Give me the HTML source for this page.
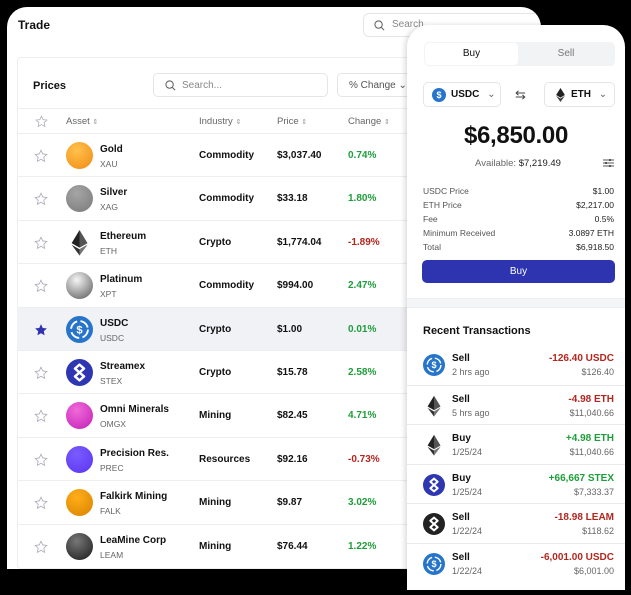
<!DOCTYPE html>
<html><head><meta charset="utf-8"><style>
*{margin:0;padding:0;box-sizing:border-box}
body{width:631px;height:595px;background:#000;position:relative;overflow:hidden;font-family:"Liberation Sans",sans-serif;color:#111}
.a{position:absolute}
#left{left:7px;top:7px;width:534px;height:562px;background:#fff;border-radius:20px 20px 0 0;overflow:hidden}
.b{font-weight:bold}
.row{position:absolute;left:10px;width:540px;height:43.4px;border-top:1px solid #eceef1}
.ic{position:absolute;width:27px;height:27px;border-radius:50%}
.star{position:absolute}
#right{left:407px;top:25px;width:218px;height:565px;background:#fff;border-radius:22px 22px 0 0;box-shadow:-2px 0 6px rgba(0,0,0,.15);overflow:hidden}
.dl{position:absolute;left:16px;right:11px;font-size:8.5px;color:#555;display:flex;justify-content:space-between}
.dl span:last-child{color:#222}
.tx{position:absolute;left:0;width:218px;height:39.5px;border-top:1px solid #e8eaed}
.tx .t1{position:absolute;left:45px;top:8px;font-size:10px;font-weight:bold}
.tx .t2{position:absolute;left:45px;top:22px;font-size:9px;color:#666}
.tx .r1{position:absolute;right:11px;top:8px;font-size:10px;font-weight:bold}
.tx .r2{position:absolute;right:11px;top:22px;font-size:9px;color:#666}
.red{color:#b3261e}.grn{color:#1f9d3a}
.so{font-size:7px;color:#999}
</style></head><body>
<div id="left" class="a">
 <div class="a b" style="left:11px;top:11px;font-size:12px">Trade</div>
 <div class="a" style="left:356px;top:6px;width:190px;height:24px;border:1px solid #e3e5e8;border-radius:6px;font-size:10px;color:#888;padding:5px 0 0 28px">Search
  <svg class="a" style="left:10px;top:6px" width="11" height="11" viewBox="0 0 12 12"><circle cx="5" cy="5" r="4" fill="none" stroke="#666" stroke-width="1.2"/><path d="M8 8l3 3" stroke="#666" stroke-width="1.2"/></svg></div>
 <div class="a" style="left:10px;top:50px;width:540px;height:512px;border:1px solid #eceef1;border-radius:4px"></div>
 <div class="a b" style="left:26px;top:73px;font-size:11px">Prices</div>
 <div class="a" style="left:146px;top:66px;width:175px;height:24px;border:1px solid #e3e5e8;border-radius:5px;font-size:10px;color:#888;padding:6px 0 0 28px">Search...
  <svg class="a" style="left:11px;top:6px" width="11" height="11" viewBox="0 0 12 12"><circle cx="5" cy="5" r="4" fill="none" stroke="#666" stroke-width="1.2"/><path d="M8 8l3 3" stroke="#666" stroke-width="1.2"/></svg></div>
 <div class="a" style="left:330px;top:66px;width:90px;height:24px;border:1px solid #e3e5e8;border-radius:5px;font-size:10px;color:#555;padding:6px 0 0 11px">% Change &#8964;</div>
 <div class="a" style="left:10px;top:101px;width:540px;height:25px;border-top:1px solid #eceef1;font-size:9.5px;color:#666">
  <svg class="a" style="left:18px;top:6px" width="13" height="13" viewBox="0 0 24 24"><path d="M12 2l3 6.5 7 .8-5.2 4.8 1.4 7L12 17.6 5.8 21.1l1.4-7L2 9.3l7-.8z" fill="none" stroke="#aab" stroke-width="1.4"/></svg>
  <span class="a" style="left:49px;top:7px">Asset <span class="so">⇕</span></span><span class="a" style="left:182px;top:7px">Industry <span class="so">⇕</span></span><span class="a" style="left:260px;top:7px">Price <span class="so">⇕</span></span><span class="a" style="left:331px;top:7px">Change <span class="so">⇕</span></span>
 </div>
 <div id="rows"></div>
</div>
<div id="right" class="a">
 <div class="a" style="left:17px;top:17px;width:191px;height:24px;background:#f2f3f5;border-radius:5px"></div>
 <div class="a" style="left:18px;top:18px;width:93px;height:22px;background:#fff;border-radius:4px;font-size:10px;text-align:center;line-height:22px">Buy</div>
 <div class="a" style="left:111px;top:18px;width:96px;height:22px;font-size:10px;color:#777;text-align:center;line-height:22px">Sell</div>
 <div class="a" style="left:16px;top:57px;width:78px;height:25px;border:1px solid #e3e5e8;border-radius:5px;font-size:10px;font-weight:bold;padding:6px 0 0 27px">USDC <span style="font-weight:normal;color:#666;margin-left:5px">&#8964;</span>
  <div class="a" style="left:8px;top:5px;width:14px;height:14px;border-radius:50%;background:#2775ca;color:#fff;font-size:9px;text-align:center;line-height:14px">$</div></div>
 <div class="a" style="left:108px;top:62px;font-size:13px;color:#444">⇆</div>
 <div class="a" style="left:137px;top:57px;width:71px;height:25px;border:1px solid #e3e5e8;border-radius:5px;font-size:10px;font-weight:bold;padding:6px 0 0 26px">ETH <span style="font-weight:normal;color:#666;margin-left:5px">&#8964;</span>
  <svg class="a" style="left:11px;top:5px" width="9" height="14" viewBox="0 0 10 16"><path d="M5 0L0 8l5 3 5-3z" fill="#222"/><path d="M5 12L0 9l5 7 5-7z" fill="#444"/></svg></div>
 <div class="a b" style="left:0;width:218px;top:97px;text-align:center;font-size:24px;letter-spacing:-.3px">$6,850.00</div>
 <div class="a" style="left:0;width:222px;top:133px;text-align:center;font-size:9.5px;color:#666">Available: <span style="color:#222">$7,219.49</span></div>
 <svg class="a" style="left:196px;top:133px" width="11" height="10" viewBox="0 0 11 10"><path d="M0 2h11M0 5h11M0 8h11" stroke="#555"/><rect x="6" y="1" width="2" height="2" fill="#555"/><rect x="2" y="4" width="2" height="2" fill="#555"/><rect x="6" y="7" width="2" height="2" fill="#555"/></svg>
 <div class="dl" style="top:161px"><span>USDC Price</span><span>$1.00</span></div>
 <div class="dl" style="top:175px"><span>ETH Price</span><span>$2,217.00</span></div>
 <div class="dl" style="top:189px"><span>Fee</span><span>0.5%</span></div>
 <div class="dl" style="top:203px"><span>Minimum Received</span><span>3.0897 ETH</span></div>
 <div class="dl" style="top:217px"><span>Total</span><span>$6,918.50</span></div>
 <div class="a" style="left:15px;top:235px;width:193px;height:23px;background:#2e34b0;border-radius:5px;color:#fff;font-size:10px;text-align:center;line-height:23px">Buy</div>
 <div class="a" style="left:0;top:273px;width:218px;height:10px;background:#f4f5f7;border-top:1px solid #eceef1;border-bottom:1px solid #eceef1"></div>
 <div class="a b" style="left:16px;top:300px;font-size:11px">Recent Transactions</div>
 <div id="txs"></div>
</div>
<script>
const usdc='<div class="ic" style="background:#2775ca;left:LEFTpx;top:TOPpx;width:SZpx;height:SZpx"><svg width="SZ" height="SZ" viewBox="0 0 24 24"><circle cx="12" cy="12" r="7.5" fill="none" stroke="#fff" stroke-width="1.6" stroke-dasharray="9 3"/><text x="12" y="15.5" text-anchor="middle" font-size="10" font-weight="bold" fill="#fff" font-family="Liberation Sans">$</text></svg></div>';
const eth='<svg class="a" style="left:LEFTpx;top:TOPpx" width="SZ" height="SZ" viewBox="0 0 24 24"><path d="M12 1L5 12.5l7 4 7-4z" fill="#222"/><path d="M12 1v15.5l7-4z" fill="#555"/><path d="M12 18L5 14l7 9.5 7-9.5z" fill="#333"/><path d="M12 18v5.5l7-9.5z" fill="#777"/></svg>';
function eight(bg){return '<div class="ic" style="background:'+bg+';left:LEFTpx;top:TOPpx;width:SZpx;height:SZpx"><svg width="SZ" height="SZ" viewBox="0 0 24 24"><path d="M12 5l4 3.5-8 7 4 3.5 4-3.5-8-7z" fill="none" stroke="#fff" stroke-width="2.2" stroke-linejoin="round"/></svg></div>'}
function ball(c1,c2){return '<div class="ic" style="left:LEFTpx;top:TOPpx;width:SZpx;height:SZpx;background:radial-gradient(circle at 40% 30%,'+c1+','+c2+')"></div>'}
const assets=[
['Gold','XAU','Commodity','$3,037.40','0.74%',0,ball('#ffc24d','#f08a12')],
['Silver','XAG','Commodity','$33.18','1.80%',0,ball('#a5a5a5','#7a7a7a')],
['Ethereum','ETH','Crypto','$1,774.04','-1.89%',1,eth],
['Platinum','XPT','Commodity','$994.00','2.47%',0,ball('#f5f5f5','#555')],
['USDC','USDC','Crypto','$1.00','0.01%',0,usdc],
['Streamex','STEX','Crypto','$15.78','2.58%',0,eight('#2f36b2')],
['Omni Minerals','OMGX','Mining','$82.45','4.71%',0,ball('#f06ad8','#c21fb8')],
['Precision Res.','PREC','Resources','$92.16','-0.73%',1,ball('#7a5cff','#5b34f0')],
['Falkirk Mining','FALK','Mining','$9.87','3.02%',0,ball('#ffae1a','#d98200')],
['LeaMine Corp','LEAM','Mining','$76.44','1.22%',0,ball('#777','#1a1a1a')]];
let h='';
assets.forEach((a,i)=>{const top=126+i*43.4;const sel=i==4;
const star=sel?'<path d="M12 2l3 6.5 7 .8-5.2 4.8 1.4 7L12 17.6 5.8 21.1l1.4-7L2 9.3l7-.8z" fill="#2e34b0"/>':'<path d="M12 2l3 6.5 7 .8-5.2 4.8 1.4 7L12 17.6 5.8 21.1l1.4-7L2 9.3l7-.8z" fill="none" stroke="#aab" stroke-width="1.4"/>';
h+='<div class="row" style="top:'+top+'px;'+(sel?'background:#f1f2f6':'')+'"><svg class="star" style="left:17px;top:15px" width="14" height="14" viewBox="0 0 24 24">'+star+'</svg>'+
a[6].replace(/LEFT/g,49).replace(/TOP/g,8).replace(/SZ/g,27)+
'<div class="a b" style="left:83px;top:10px;font-size:10px">'+a[0]+'</div><div class="a" style="left:83px;top:25px;font-size:8.5px;color:#666">'+a[1]+'</div>'+
'<div class="a b" style="left:182px;top:16px;font-size:10px">'+a[2]+'</div><div class="a b" style="left:260px;top:16px;font-size:10px">'+a[3]+'</div>'+
'<div class="a b '+(a[5]?'red':'grn')+'" style="left:331px;top:16px;font-size:10px">'+a[4]+'</div></div>';});
document.getElementById('rows').innerHTML=h;
const txs=[['Sell','2 hrs ago','-126.40 USDC','$126.40',usdc,1],['Sell','5 hrs ago','-4.98 ETH','$11,040.66',eth,1],['Buy','1/25/24','+4.98 ETH','$11,040.66',eth,0],['Buy','1/25/24','+66,667 STEX','$7,333.37',eight('#2f36b2'),0],['Sell','1/22/24','-18.98 LEAM','$118.62',eight('#222'),1],['Sell','1/22/24','-6,001.00 USDC','$6,001.00',usdc,1]];
let t='';
txs.forEach((x,i)=>{const top=320+i*39.5;
t+='<div class="tx" style="top:'+top+'px;'+(i==0?'border-top:none':'')+'">'+x[4].replace(/LEFT/g,16).replace(/TOP/g,9).replace(/SZ/g,22)+
'<div class="t1">'+x[0]+'</div><div class="t2">'+x[1]+'</div><div class="r1 '+(x[5]?'red':'grn')+'">'+x[2]+'</div><div class="r2">'+x[3]+'</div></div>';});
document.getElementById('txs').innerHTML=t;
</script>
</body></html>
